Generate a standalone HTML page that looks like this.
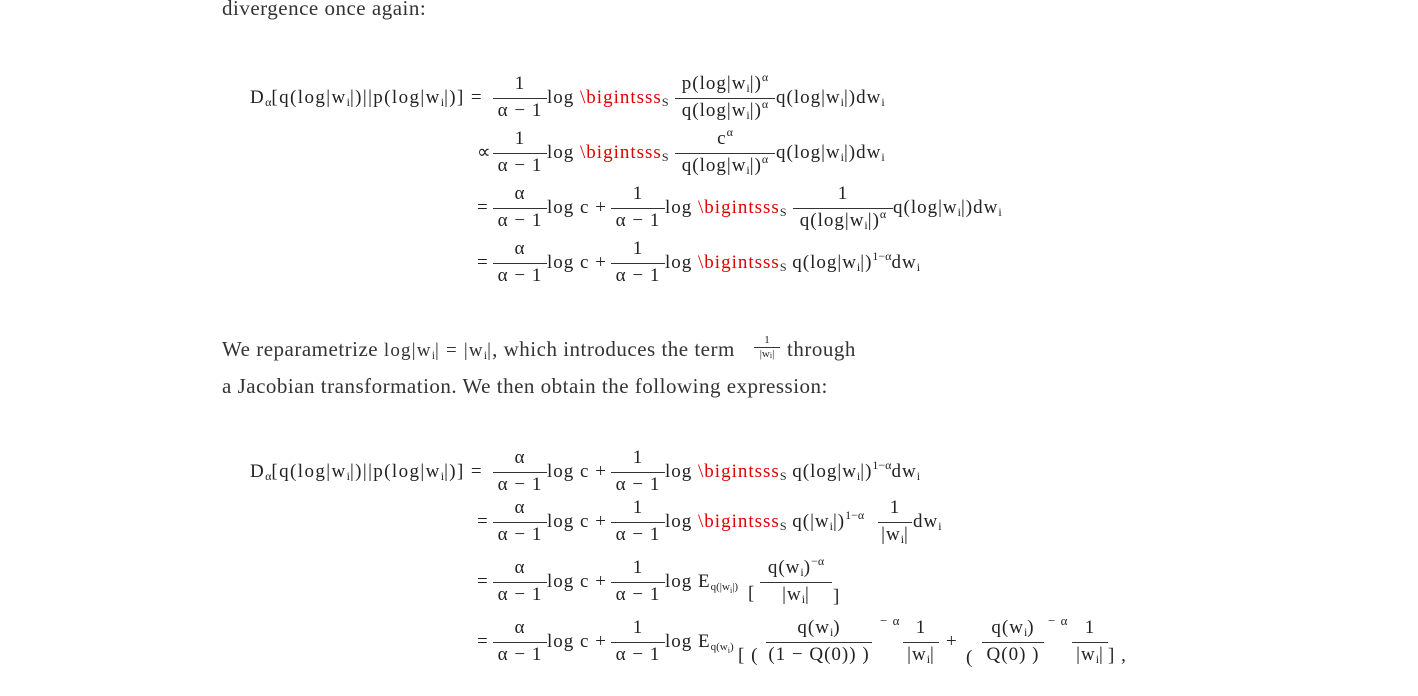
<!DOCTYPE html>
<html><head><meta charset="utf-8"><style>
body{margin:0;width:1418px;height:696px;background:#fff;position:relative;overflow:hidden}
.a{position:absolute;white-space:nowrap;font:19px/20px "Liberation Serif",serif;color:#222;letter-spacing:1px}
.r{color:#e00000}
sub,sup{font-size:12px;line-height:0;letter-spacing:0}
sub{vertical-align:-3px}
sup{vertical-align:8px}
.f{position:absolute;text-align:center;font:19px "Liberation Serif",serif;color:#222;white-space:nowrap;letter-spacing:1px}
.f .n{line-height:24px;padding-bottom:2px;border-bottom:1px solid #333}
.f .d{line-height:24px}
.p{position:absolute;font:21px/22px "Liberation Serif",serif;color:#333;white-space:nowrap;letter-spacing:0.5px}
</style></head><body>
<div class="p" style="left:222px;top:-3px">divergence once again:</div>

<!-- block 1 -->
<div class="a" style="left:250px;top:88px;letter-spacing:1.4px">D<sub>α</sub>[q(log|w<sub>i</sub>|)||p(log|w<sub>i</sub>|)] =</div>
<div class="f" style="left:493px;top:72px;width:54px"><div class="n">1</div><div class="d">α − 1</div></div>
<div class="a" style="left:547px;top:88px">log <span class="r">\bigintsss</span><sub>S</sub></div>
<div class="f" style="left:675px;top:72px;width:100px"><div class="n">p(log|w<sub>i</sub>|)<sup>α</sup></div><div class="d">q(log|w<sub>i</sub>|)<sup>α</sup></div></div>
<div class="a" style="left:776px;top:88px">q(log|w<sub>i</sub>|)dw<sub>i</sub></div>

<div class="a" style="left:477px;top:143px">∝</div>
<div class="f" style="left:493px;top:127px;width:54px"><div class="n">1</div><div class="d">α − 1</div></div>
<div class="a" style="left:547px;top:143px">log <span class="r">\bigintsss</span><sub>S</sub></div>
<div class="f" style="left:675px;top:127px;width:100px"><div class="n">c<sup>α</sup></div><div class="d">q(log|w<sub>i</sub>|)<sup>α</sup></div></div>
<div class="a" style="left:776px;top:143px">q(log|w<sub>i</sub>|)dw<sub>i</sub></div>

<div class="a" style="left:477px;top:198px">=</div>
<div class="f" style="left:493px;top:182px;width:54px"><div class="n">α</div><div class="d">α − 1</div></div>
<div class="a" style="left:547px;top:198px">log c + </div>
<div class="f" style="left:611px;top:182px;width:54px"><div class="n">1</div><div class="d">α − 1</div></div>
<div class="a" style="left:665px;top:198px">log <span class="r">\bigintsss</span><sub>S</sub></div>
<div class="f" style="left:793px;top:182px;width:100px"><div class="n">1</div><div class="d">q(log|w<sub>i</sub>|)<sup>α</sup></div></div>
<div class="a" style="left:893px;top:198px">q(log|w<sub>i</sub>|)dw<sub>i</sub></div>

<div class="a" style="left:477px;top:253px">=</div>
<div class="f" style="left:493px;top:237px;width:54px"><div class="n">α</div><div class="d">α − 1</div></div>
<div class="a" style="left:547px;top:253px">log c + </div>
<div class="f" style="left:611px;top:237px;width:54px"><div class="n">1</div><div class="d">α − 1</div></div>
<div class="a" style="left:665px;top:253px">log <span class="r">\bigintsss</span><sub>S</sub> q(log|w<sub>i</sub>|)<sup>1−α</sup>dw<sub>i</sub></div>

<!-- paragraph -->
<div class="p" style="left:222px;top:338px">We reparametrize <span style="font-size:19px;letter-spacing:1.2px">log|w<sub>i</sub>| = |w<sub>i</sub>|</span>, which introduces the term</div>
<div class="f" style="left:754px;top:335px;width:26px;font-size:11px;letter-spacing:0"><div class="n" style="line-height:11px;padding-bottom:1px">1</div><div class="d" style="line-height:12px">|w<sub style="font-size:8px;vertical-align:-1px">i</sub>|</div></div>
<div class="p" style="left:787px;top:338px">through</div>
<div class="p" style="left:222px;top:375px">a Jacobian transformation. We then obtain the following expression:</div>

<!-- block 2 -->
<div class="a" style="left:250px;top:462px;letter-spacing:1.4px">D<sub>α</sub>[q(log|w<sub>i</sub>|)||p(log|w<sub>i</sub>|)] =</div>
<div class="f" style="left:493px;top:446px;width:54px"><div class="n">α</div><div class="d">α − 1</div></div>
<div class="a" style="left:547px;top:462px">log c + </div>
<div class="f" style="left:611px;top:446px;width:54px"><div class="n">1</div><div class="d">α − 1</div></div>
<div class="a" style="left:665px;top:462px">log <span class="r">\bigintsss</span><sub>S</sub> q(log|w<sub>i</sub>|)<sup>1−α</sup>dw<sub>i</sub></div>

<div class="a" style="left:477px;top:512px">=</div>
<div class="f" style="left:493px;top:496px;width:54px"><div class="n">α</div><div class="d">α − 1</div></div>
<div class="a" style="left:547px;top:512px">log c + </div>
<div class="f" style="left:611px;top:496px;width:54px"><div class="n">1</div><div class="d">α − 1</div></div>
<div class="a" style="left:665px;top:512px">log <span class="r">\bigintsss</span><sub>S</sub> q(|w<sub>i</sub>|)<sup>1−α</sup></div>
<div class="f" style="left:878px;top:496px;width:34px"><div class="n">1</div><div class="d">|w<sub>i</sub>|</div></div>
<div class="a" style="left:913px;top:512px">dw<sub>i</sub></div>

<div class="a" style="left:477px;top:572px">=</div>
<div class="f" style="left:493px;top:556px;width:54px"><div class="n">α</div><div class="d">α − 1</div></div>
<div class="a" style="left:547px;top:572px">log c + </div>
<div class="f" style="left:611px;top:556px;width:54px"><div class="n">1</div><div class="d">α − 1</div></div>
<div class="a" style="left:665px;top:572px">log E<sub style="font-size:11px">q(|w<sub style="font-size:8px">i</sub>|)</sub></div>
<div class="a" style="left:748px;top:584px">[</div>
<div class="f" style="left:760px;top:556px;width:72px"><div class="n">q(w<sub>i</sub>)<sup>−α</sup></div><div class="d">|w<sub>i</sub>|</div></div>
<div class="a" style="left:833px;top:587px">]</div>

<div class="a" style="left:477px;top:632px">=</div>
<div class="f" style="left:493px;top:616px;width:54px"><div class="n">α</div><div class="d">α − 1</div></div>
<div class="a" style="left:547px;top:632px">log c + </div>
<div class="f" style="left:611px;top:616px;width:54px"><div class="n">1</div><div class="d">α − 1</div></div>
<div class="a" style="left:665px;top:632px">log E<sub style="font-size:11px">q(w<sub style="font-size:8px">i</sub>)</sub></div>
<div class="a" style="left:738px;top:646px">[ (</div>
<div class="f" style="left:766px;top:616px;width:106px"><div class="n">q(w<sub>i</sub>)</div><div class="d">(1 − Q(0)) )</div></div>
<div class="a" style="left:880px;top:611px;font-size:13px">− α</div>
<div class="f" style="left:903px;top:616px;width:36px"><div class="n">1</div><div class="d">|w<sub>i</sub>|</div></div>
<div class="a" style="left:946px;top:632px">+</div>
<div class="a" style="left:966px;top:648px">(</div>
<div class="f" style="left:982px;top:616px;width:62px"><div class="n">q(w<sub>i</sub>)</div><div class="d">Q(0) )</div></div>
<div class="a" style="left:1048px;top:611px;font-size:13px">− α</div>
<div class="f" style="left:1072px;top:616px;width:36px"><div class="n">1</div><div class="d">|w<sub>i</sub>|</div></div>
<div class="a" style="left:1108px;top:646px">] ,</div>
</body></html>
